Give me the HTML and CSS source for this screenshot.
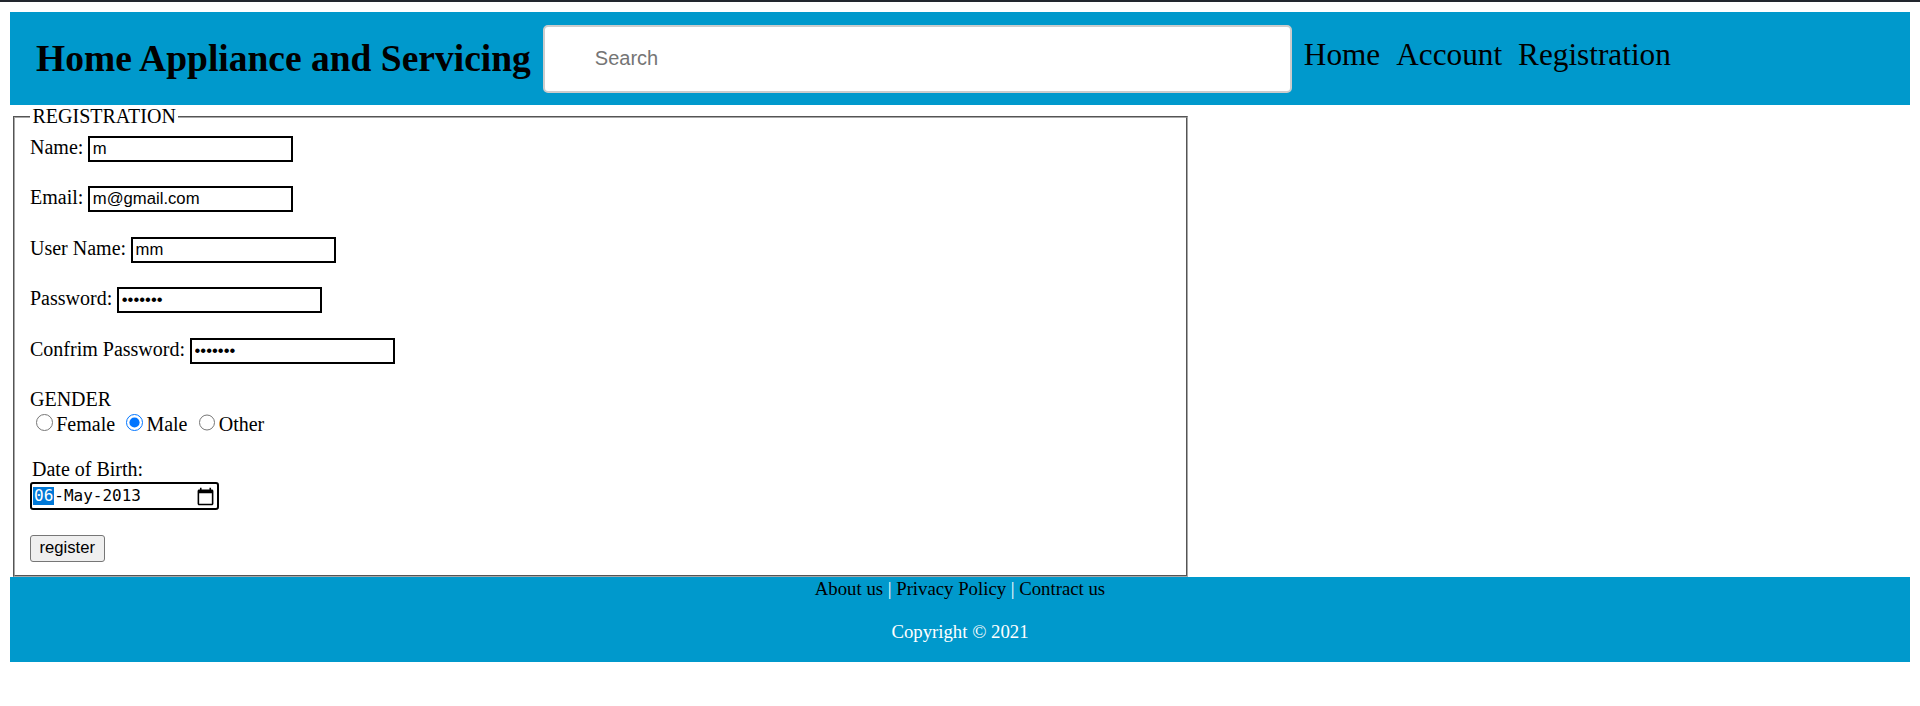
FILE: index.html
```html
<!DOCTYPE html>
<html lang="en">
<head>
<meta charset="utf-8">
<title>Registration</title>
<link rel="stylesheet" href="styles.css">
</head>
<body>
<div class="topbar"></div>
<div class="page">
  <header class="site-header">
    <h1 class="brand">Home Appliance and Servicing</h1>
    <input class="search" type="text" placeholder="Search">
    <nav class="nav">
      <a class="nav-link" href="#">Home</a>
      <a class="nav-link" href="#">Account</a>
      <a class="nav-link" href="#">Registration</a>
    </nav>
  </header>

  <fieldset class="reg">
    <legend class="reg-legend">REGISTRATION</legend>
    <div class="form">
      <div class="row"><label class="lbl">Name:</label><input class="field" type="text" value="m"></div>
      <div class="row"><label class="lbl">Email:</label><input class="field" type="text" value="m@gmail.com"></div>
      <div class="row"><label class="lbl">User Name:</label><input class="field" type="text" value="mm"></div>
      <div class="row"><label class="lbl">Password:</label><input class="field" type="password" value="mmmmmmm"></div>
      <div class="row"><label class="lbl">Confrim Password:</label><input class="field" type="password" value="mmmmmmm"></div>

      <div class="gender-title">GENDER</div>
      <div class="radios"><input class="radio" type="radio" name="g">Female <input class="radio" type="radio" name="g" checked>Male <input class="radio" type="radio" name="g">Other</div>

      <div class="dob-label">Date of Birth:</div>
      <div class="date-box">
        <span class="date-text"><span class="seg-sel">06</span>-May-2013</span>
        <svg class="cal-icon" width="19" height="19" viewBox="0 0 24 24"><path d="M20 3h-1V1h-2v2H7V1H5v2H4c-1.1 0-2 .9-2 2v16c0 1.1.9 2 2 2h16c1.1 0 2-.9 2-2V5c0-1.1-.9-2-2-2zm0 18H4V8h16v13z" fill="#000"/></svg>
      </div>

      <button class="btn" type="button">register</button>
    </div>
  </fieldset>

  <footer class="site-footer">
    <p class="foot-links"><a class="foot-link" href="#">About us</a> | <a class="foot-link" href="#">Privacy Policy</a> | <a class="foot-link" href="#">Contract us</a></p>
    <p class="copyright">Copyright &copy; 2021</p>
  </footer>
</div>
</body>
</html>
```

FILE: styles.css
```css
html, body {
  margin: 0;
  padding: 0;
  background: #ffffff;
}

body {
  font-family: "Liberation Serif", "Times New Roman", serif;
  font-size: 20px;
  color: #000;
}

.topbar {
  height: 2px;
  background: #22262e;
}

.page {
  padding: 10px 10px 0 10px;
}

/* Header */
.site-header {
  height: 93px;
  background: #0099cc;
  display: flex;
  align-items: center;
  gap: 12px;
  padding-left: 26px;
}

.brand {
  margin: 0;
  font-size: 37.5px;
  font-weight: bold;
  white-space: nowrap;
}

.search {
  box-sizing: border-box;
  width: 749px;
  height: 68px;
  border: 2px solid #cccccc;
  border-radius: 5px;
  padding: 0 0 0 50px;
  font-family: "Liberation Sans", Arial, sans-serif;
  font-size: 20px;
  background: #fff;
  outline: none;
}

.search::placeholder {
  color: #757575;
}

.nav {
  display: flex;
  gap: 16px;
  margin-bottom: 8px;
}

.nav-link {
  color: #000;
  text-decoration: none;
  font-size: 31.25px;
}

/* Registration fieldset */
.reg {
  width: 60%;
  margin: 0 2.5px;
  border: 2px groove #a8a8a8;
  padding: 8px 15.5px 13.3px 15.5px;
}

.reg-legend {
  padding: 0 2.5px;
  font-size: 20px;
}

.form {
  display: flex;
  flex-direction: column;
  align-items: flex-start;
}

.row {
  display: flex;
  align-items: baseline;
  gap: 5px;
  margin-bottom: 24.4px;
}

.row:nth-child(5) {
  margin-bottom: 24.1px;
}

.lbl {
  white-space: nowrap;
}

.field {
  box-sizing: border-box;
  width: 205px;
  height: 26px;
  border: 2.5px solid #000;
  padding: 0 2.5px;
  font-family: "Liberation Sans", Arial, sans-serif;
  font-size: 16.67px;
  color: #000;
  background: #fff;
  outline: none;
}

.gender-title {
  line-height: normal;
}

.radios {
  white-space: nowrap;
}

.radio {
  width: 16.25px;
  height: 16.25px;
  margin: 3.75px 3.75px 0 6.25px;
}

.dob-label {
  margin-top: 22.3px;
  margin-left: 2px;
}

.date-box {
  box-sizing: border-box;
  width: 189px;
  height: 28.3px;
  margin-top: 1px;
  border: 2.5px solid #000;
  border-radius: 3px;
  display: flex;
  align-items: center;
  padding: 0 2px 0 1px;
}

.date-text {
  font-family: "DejaVu Sans Mono", "Liberation Mono", monospace;
  font-size: 16px;
  line-height: 17.4px;
  white-space: nowrap;
}

.seg-sel {
  display: inline-block;
  background: #0078d7;
  color: #fff;
  padding: 0 1px;
}

.cal-icon {
  margin-left: auto;
  display: block;
}

.btn {
  box-sizing: border-box;
  margin-top: 24.3px;
  height: 27.4px;
  padding: 0 8.5px;
  background: #efefef;
  border: 1px solid #767676;
  border-radius: 3px;
  font-family: "Liberation Sans", Arial, sans-serif;
  font-size: 16.67px;
  color: #000;
}

/* Footer */
.site-footer {
  background: #0099cc;
  color: #fff;
  text-align: center;
  padding: 1px 0 19px 0;
}

.foot-links {
  margin: 0;
  font-size: 18.75px;
}

.foot-link {
  color: #000;
  text-decoration: none;
}

.copyright {
  margin: 20.5px 0 0 0;
  font-size: 18.75px;
}
```
